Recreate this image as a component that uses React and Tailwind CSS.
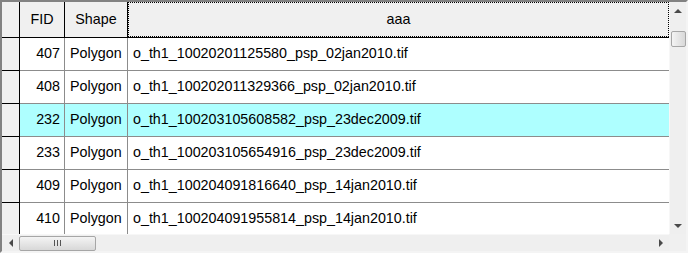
import React from "react";

const rows = [
  { fid: 407, shape: "Polygon", name: "o_th1_10020201125580_psp_02jan2010.tif" },
  { fid: 408, shape: "Polygon", name: "o_th1_100202011329366_psp_02jan2010.tif" },
  { fid: 232, shape: "Polygon", name: "o_th1_100203105608582_psp_23dec2009.tif", selected: true },
  { fid: 233, shape: "Polygon", name: "o_th1_100203105654916_psp_23dec2009.tif" },
  { fid: 409, shape: "Polygon", name: "o_th1_100204091816640_psp_14jan2010.tif" },
  { fid: 410, shape: "Polygon", name: "o_th1_100204091955814_psp_14jan2010.tif" },
];

function Arrow({ dir }) {
  const pts = {
    up: "0,4 4,0 8,4",
    down: "0,0 8,0 4,4",
    left: "4,0 4,8 0,4",
    right: "0,0 4,4 0,8",
  }[dir];
  const vertical = dir === "up" || dir === "down";
  return (
    <svg width={vertical ? 8 : 4} height={vertical ? 4 : 8} viewBox={vertical ? "0 0 8 4" : "0 0 4 8"}>
      <polygon points={pts} fill="#4a4a4a" />
    </svg>
  );
}

function AttributeTable() {
  return (
    <div
      className="w-[688px] h-[253px] bg-[#f0f0f0] border-2 border-t-[#828282] border-l-[#828282] border-r-[#f4f4f4] border-b-[#f4f4f4] flex flex-col overflow-hidden text-[14.3px] text-black"
      style={{ fontFamily: '"Liberation Sans", Arial, sans-serif' }}
    >
      <div className="flex h-[232px]">
        <div className="flex-1 overflow-hidden bg-white">
          {/* header */}
          <div className="flex h-[36px] bg-[#f0f0f0] border-b border-black">
            <div className="w-[18px] shrink-0 border-r border-black" />
            <div className="w-[45px] shrink-0 border-r border-black flex items-center justify-center">FID</div>
            <div className="w-[63px] shrink-0 border-r border-black flex items-center justify-center">Shape</div>
            <div className="flex-1 border border-dotted border-black flex items-center justify-center">aaa</div>
          </div>
          {rows.map((r) => (
            <div key={r.fid} className={`flex h-[33px] ${r.selected ? "bg-[#aeffff]" : "bg-white"}`}>
              <div className="w-[18px] shrink-0 bg-[#f0f0f0] border-r border-b border-black" />
              <div className="w-[45px] shrink-0 border-r border-b border-[#8c8c8c] flex items-center justify-end pr-[4px]">
                {r.fid}
              </div>
              <div className="w-[63px] shrink-0 border-r border-b border-[#8c8c8c] flex items-center pl-[5px]">
                {r.shape}
              </div>
              <div className="flex-1 border-b border-[#8c8c8c] flex items-center pl-[5px] whitespace-nowrap">
                {r.name}
              </div>
            </div>
          ))}
        </div>
        {/* vertical scrollbar */}
        <div className="w-[17px] shrink-0 bg-[#efefef] flex flex-col items-center border-l border-[#f7f7f7]">
          <div className="h-[17px] w-full flex items-center justify-center">
            <Arrow dir="up" />
          </div>
          <div className="h-[12px]" />
          <div className="w-[15px] h-[16px] rounded-[2px] border border-[#a6a6a6] bg-gradient-to-r from-[#f4f4f4] to-[#d8d8d8]" />
          <div className="flex-1" />
          <div className="h-[17px] w-full flex items-center justify-center">
            <Arrow dir="down" />
          </div>
        </div>
      </div>
      {/* horizontal scrollbar */}
      <div className="flex h-[17px]">
        <div className="flex-1 bg-[#efefef] flex items-center border-t border-[#f7f7f7]">
          <div className="w-[17px] h-full flex items-center justify-center">
            <Arrow dir="left" />
          </div>
          <div className="w-[77px] h-[15px] rounded-[2px] border border-[#a6a6a6] bg-gradient-to-b from-[#f4f4f4] to-[#d8d8d8] flex items-center justify-center gap-[2px]">
            <span className="w-px h-[6px] bg-[#555]" />
            <span className="w-px h-[6px] bg-[#555]" />
            <span className="w-px h-[6px] bg-[#555]" />
          </div>
          <div className="flex-1" />
          <div className="w-[17px] h-full flex items-center justify-center">
            <Arrow dir="right" />
          </div>
        </div>
        <div className="w-[17px] bg-[#f0f0f0]" />
      </div>
    </div>
  );
}

export default function App() {
  return <AttributeTable />;
}
